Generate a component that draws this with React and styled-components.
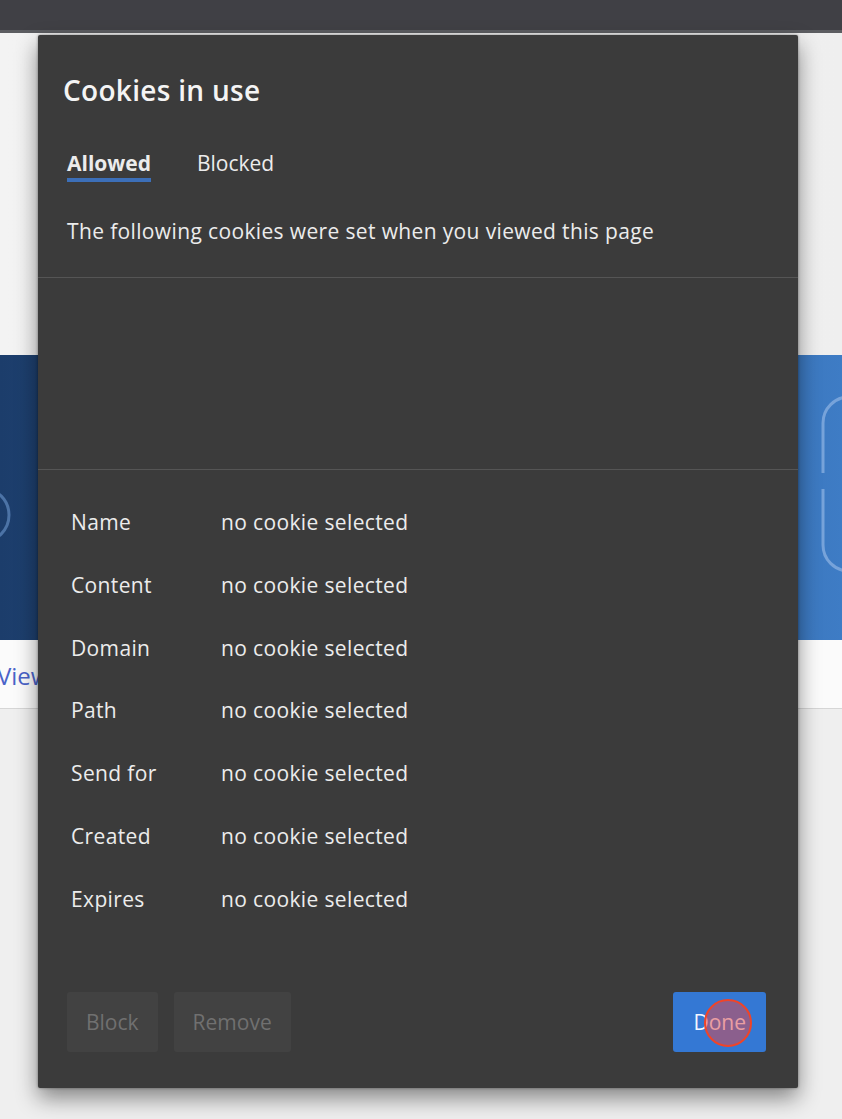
import React from "react"
import styled, { createGlobalStyle } from "styled-components"

const GlobalStyle = createGlobalStyle`
  html, body {
    margin: 0;
    padding: 0;
    background: #efefef;
    font-family: "Segoe UI", "Open Sans", "Noto Sans", sans-serif;
  }
`

const Page = styled.div`
  position: relative;
  width: 842px;
  height: 1119px;
  overflow: hidden;
  background: #efefef;
`

const TopBar = styled.div`
  height: 30px;
  background: #404045;
  border-bottom: 3px solid #5c5d61;
`

const Spacer = styled.div`
  height: 322px;
  background: linear-gradient(90deg, #f3f3f3, #efefef);
`

const Banner = styled.div`
  height: 285px;
  background: linear-gradient(90deg, #1c3d6b 0%, #2b5c99 55%, #3e7cc5 100%);
  svg {
    display: block;
  }
`

const LinkStrip = styled.div`
  height: 68px;
  background: #fbfbfb;
  border-bottom: 1px solid #d6d6d6;
  display: flex;
  align-items: center;
`

const ViewLink = styled.a`
  margin-left: -3px;
  margin-top: 2px;
  font-size: 24px;
  color: #4a63c9;
  text-decoration: none;
`

const Dialog = styled.div`
  position: absolute;
  top: 35px;
  left: 38px;
  width: 760px;
  height: 1053px;
  box-sizing: border-box;
  background: #3b3b3b;
  color: #ececec;
  display: flex;
  flex-direction: column;
  box-shadow: 0 10px 22px rgba(0, 0, 0, 0.45), 0 0 3px rgba(0, 0, 0, 0.4);
  border-radius: 2px;
`

const Header = styled.div`
  padding: 37px 29px 32px;
  border-bottom: 1px solid #555555;
`

const Title = styled.h1`
  margin: 0 0 0 -4px;
  font-size: 28px;
  line-height: 36px;
  font-weight: 600;
  letter-spacing: 0.3px;
  color: #f4f4f4;
`

const Tabs = styled.div`
  display: flex;
  gap: 46px;
  margin-top: 41px;
`

const Tab = styled.div`
  font-size: 21px;
  line-height: 28px;
  padding-bottom: 1px;
  font-weight: ${(p) => (p.active ? 700 : 400)};
  border-bottom: 4px solid ${(p) => (p.active ? "#3c6fb8" : "transparent")};
`

const Description = styled.p`
  margin: 35px 0 0;
  font-size: 21px;
  line-height: 28px;
  letter-spacing: 0.36px;
`

const TreeArea = styled.div`
  height: 191px;
  border-bottom: 1px solid #555555;
`

const Details = styled.div`
  display: grid;
  grid-template-columns: 150px 1fr;
  row-gap: 34.75px;
  padding: 38px 33px 0;
  font-size: 21px;
  line-height: 28px;
  letter-spacing: 0.36px;
`

const Label = styled.div``

const Value = styled.div``

const Footer = styled.div`
  margin-top: auto;
  padding: 0 32px 36px 29px;
  display: flex;
  gap: 16px;
`

const Button = styled.button`
  position: relative;
  height: 60px;
  padding: 0 ${(p) => p.pad || 19}px;
  border: none;
  border-radius: 3px;
  font-family: inherit;
  font-size: 21px;
  background: ${(p) => (p.primary ? "#3478d4" : "#424242")};
  color: ${(p) => (p.primary ? "#f2f6ff" : "#707070")};
  margin-left: ${(p) => (p.primary ? "auto" : "0")};
`

const ClickMark = styled.span`
  position: absolute;
  left: 31px;
  top: 7px;
  width: 44px;
  height: 44px;
  border-radius: 50%;
  border: 2px solid #f04428;
  background: rgba(225, 70, 70, 0.5);
`

const rows = ["Name", "Content", "Domain", "Path", "Send for", "Created", "Expires"]

export default function App() {
  return (
    <>
      <GlobalStyle />
      <Page>
        <TopBar />
        <Spacer />
        <Banner>
          <svg width="842" height="285" viewBox="0 0 842 285">
            <circle cx="-18" cy="160" r="27" fill="none" stroke="#4c73a6" strokeWidth="3" />
            <path d="M823 118 V68 A26 26 0 0 1 849 42" fill="none" stroke="#77a3da" strokeWidth="3" />
            <path d="M823 134 V190 A26 26 0 0 0 849 216" fill="none" stroke="#77a3da" strokeWidth="3" />
          </svg>
        </Banner>
        <LinkStrip>
          <ViewLink>View</ViewLink>
        </LinkStrip>

        <Dialog>
          <Header>
            <Title>Cookies in use</Title>
            <Tabs>
              <Tab active>Allowed</Tab>
              <Tab>Blocked</Tab>
            </Tabs>
            <Description>The following cookies were set when you viewed this page</Description>
          </Header>
          <TreeArea />
          <Details>
            {rows.map((r) => (
              <React.Fragment key={r}>
                <Label>{r}</Label>
                <Value>no cookie selected</Value>
              </React.Fragment>
            ))}
          </Details>
          <Footer>
            <Button>Block</Button>
            <Button>Remove</Button>
            <Button primary pad={20}>
              Done
              <ClickMark />
            </Button>
          </Footer>
        </Dialog>
      </Page>
    </>
  )
}
